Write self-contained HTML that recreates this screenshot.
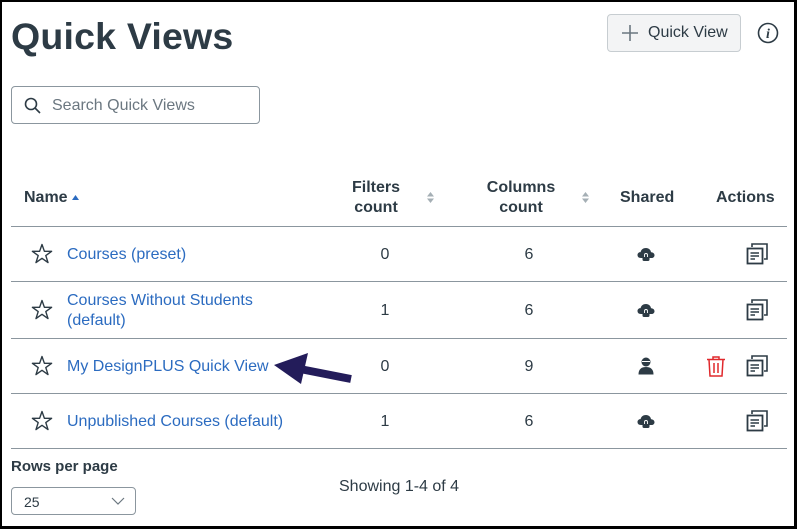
<!DOCTYPE html>
<html><head><meta charset="utf-8"><style>
*{margin:0;padding:0;box-sizing:border-box}
html,body{width:797px;height:529px;overflow:hidden;background:#fff}
body{font-family:"Liberation Sans",Arial,sans-serif;color:#2d3b45;position:relative}
.frame{position:absolute;left:0;top:0;width:797px;height:529px;border:2px solid #000;border-bottom-width:3px;border-right-width:3px}
.abs{position:absolute}
h1{position:absolute;left:11px;top:15px;font-size:37.5px;font-weight:bold;color:#2d3b45;letter-spacing:0.2px}
.btn{position:absolute;left:607px;top:14px;width:134px;height:38px;background:#f3f4f5;border:1px solid #c7cdd1;border-radius:4px;font-size:16px;color:#2d3b45}
.search{position:absolute;left:11px;top:86px;width:249px;height:38px;border:1px solid #8b969e;border-radius:4px}
.th{position:absolute;font-size:16px;font-weight:bold;color:#2d3b45;line-height:20px;text-align:center}
.line{position:absolute;left:11px;width:776px;height:1px;background:#8b969e}
.link{position:absolute;color:#2b6bc0;font-size:16px;line-height:20px}
.num{position:absolute;font-size:16px;width:30px;text-align:center;color:#2d3b45}
</style></head><body>
<div class="frame"></div>
<h1>Quick Views</h1>
<div class="btn">
<svg class="abs" style="left:14px;top:10px" width="16" height="16" viewBox="0 0 16 16"><path d="M8 0V16M0 8H16" stroke="#6b7780" stroke-width="1.6"/></svg>
<span class="abs" style="left:40px;top:9px">Quick View</span>
</div>
<svg class="abs" style="left:757px;top:22px" width="22" height="22" viewBox="0 0 22 22"><circle cx="11" cy="11" r="9.5" fill="none" stroke="#2d3b45" stroke-width="1.6"/><text x="11" y="16" text-anchor="middle" font-family="Liberation Serif" font-style="italic" font-weight="bold" font-size="14" fill="#2d3b45">i</text></svg>
<div class="search">
<svg class="abs" style="left:12px;top:10px" width="17" height="17" viewBox="0 0 17 17"><circle cx="7" cy="7" r="5.5" fill="none" stroke="#2d3b45" stroke-width="1.6"/><path d="M11 11L16 16" stroke="#2d3b45" stroke-width="1.6"/></svg>
<span class="abs" style="left:40px;top:10px;font-size:16px;color:#6b7780">Search Quick Views</span>
</div>
<div class="th" style="left:24px;top:188px">Name</div>
<svg class="abs" style="left:72px;top:195px" width="7" height="5"><path d="M0 5L3.5 0L7 5Z" fill="#2b6bc0"/></svg>
<div class="th" style="left:336px;top:178px;width:80px">Filters<br>count</div>
<svg class="abs" style="left:427px;top:192px" width="7" height="11"><path d="M0 4.5L3.5 0L7 4.5ZM0 6.5L3.5 11L7 6.5Z" fill="#a5afb5"/></svg>
<div class="th" style="left:481px;top:178px;width:80px">Columns<br>count</div>
<svg class="abs" style="left:582px;top:192px" width="7" height="11"><path d="M0 4.5L3.5 0L7 4.5ZM0 6.5L3.5 11L7 6.5Z" fill="#a5afb5"/></svg>
<div class="th" style="left:620px;top:188px">Shared</div>
<div class="th" style="left:716px;top:188px">Actions</div>
<div class="line" style="top:226px"></div>
<div class="line" style="top:281px"></div>
<div class="line" style="top:338px"></div>
<div class="line" style="top:393px"></div>
<div class="line" style="top:448px"></div>

<div class="link" style="left:67px;top:245px">Courses (preset)</div>
<div class="link" style="left:67px;top:291px">Courses Without Students<br>(default)</div>
<div class="link" style="left:67px;top:357px">My DesignPLUS Quick View</div>
<div class="link" style="left:67px;top:412px">Unpublished Courses (default)</div>

<svg width="0" height="0" style="position:absolute"><defs>
<symbol id="star" viewBox="0 0 22 22"><path d="M11 1.5L13.4 8.3H20.6L14.8 12.6L17 19.6L11 15.3L5 19.6L7.2 12.6L1.4 8.3H8.6Z" fill="none" stroke="#2d3b45" stroke-width="1.4" stroke-linejoin="round"/></symbol>
<symbol id="cloud" viewBox="0 0 18 14"><path d="M4 11C1.5 11 0.5 9.5 0.5 8C0.5 6.3 2 5 3.6 5.2C4 2.6 6.2 1 9 1C11.8 1 13.7 2.8 14 5.2C15.8 5.2 17.5 6.3 17.5 8.2C17.5 9.8 16.2 11 14.5 11Z" fill="#2d3b45"/><rect x="5.5" y="7" width="7" height="7" rx="1.5" fill="#2d3b45"/><path d="M7.5 10V8a1.5 1.5 0 0 1 3 0V10" stroke="#fff" stroke-width="0.9" fill="none"/></symbol>
<symbol id="copy" viewBox="0 0 22 22"><path d="M6 4V1H21V16H18" fill="none" stroke="#2d3b45" stroke-width="1.6"/><rect x="1.5" y="5.5" width="15" height="15" fill="#fff" stroke="#2d3b45" stroke-width="1.8"/><path d="M4.5 10H13M4.5 13H13M4.5 16H9" stroke="#2d3b45" stroke-width="1.4"/></symbol>
</defs></svg>

<svg class="abs" style="left:31px;top:243px" width="22" height="22"><use href="#star"/></svg>
<svg class="abs" style="left:31px;top:299px" width="22" height="22"><use href="#star"/></svg>
<svg class="abs" style="left:31px;top:355px" width="22" height="22"><use href="#star"/></svg>
<svg class="abs" style="left:31px;top:410px" width="22" height="22"><use href="#star"/></svg>

<div class="num" style="left:370px;top:246px">0</div>
<div class="num" style="left:370px;top:302px">1</div>
<div class="num" style="left:370px;top:358px">0</div>
<div class="num" style="left:370px;top:413px">1</div>
<div class="num" style="left:514px;top:246px">6</div>
<div class="num" style="left:514px;top:302px">6</div>
<div class="num" style="left:514px;top:358px">9</div>
<div class="num" style="left:514px;top:413px">6</div>

<svg class="abs" style="left:637px;top:247px" width="18" height="14"><use href="#cloud"/></svg>
<svg class="abs" style="left:637px;top:303px" width="18" height="14"><use href="#cloud"/></svg>
<svg class="abs" style="left:637px;top:414px" width="18" height="14"><use href="#cloud"/></svg>
<svg class="abs" style="left:638px;top:357px" width="16" height="18" viewBox="0 0 16 18"><circle cx="8" cy="5" r="4.5" fill="#2d3b45"/><path d="M4 4.5H12" stroke="#fff" stroke-width="1"/><path d="M0.5 17.5C0.5 12 3.5 10 8 10C12.5 10 15.5 12 15.5 17.5Z" fill="#2d3b45"/></svg>

<svg class="abs" style="left:706px;top:355px" width="20" height="22" viewBox="0 0 20 22"><path d="M1 4.5H19M7 4.5V2H13V4.5M3 4.5L4 21H16L17 4.5M8 8V18M12 8V18" fill="none" stroke="#e0282c" stroke-width="1.5"/></svg>

<svg class="abs" style="left:746px;top:243px" width="22" height="22"><use href="#copy"/></svg>
<svg class="abs" style="left:746px;top:299px" width="22" height="22"><use href="#copy"/></svg>
<svg class="abs" style="left:746px;top:355px" width="22" height="22"><use href="#copy"/></svg>
<svg class="abs" style="left:746px;top:410px" width="22" height="22"><use href="#copy"/></svg>

<svg class="abs" style="left:270px;top:352px" width="85" height="35" viewBox="0 0 85 35"><path d="M81 27L30 17" stroke="#231c5a" stroke-width="8" stroke-linecap="butt"/><path d="M4 13L38 1L31 32Z" fill="#231c5a"/></svg>

<div class="abs" style="left:11px;top:458px;font-size:15px;font-weight:bold">Rows per page</div>
<div class="abs" style="left:11px;top:487px;width:125px;height:28px;border:1px solid #8b969e;border-radius:4px">
<span class="abs" style="left:12px;top:6px;font-size:14px">25</span>
<svg class="abs" style="left:99px;top:9px" width="14" height="8"><path d="M1 1L7 7L13 1" fill="none" stroke="#6b7780" stroke-width="1.2"/></svg>
</div>
<div class="abs" style="left:339px;top:478px;font-size:16px">Showing 1-4 of 4</div>
</body></html>
